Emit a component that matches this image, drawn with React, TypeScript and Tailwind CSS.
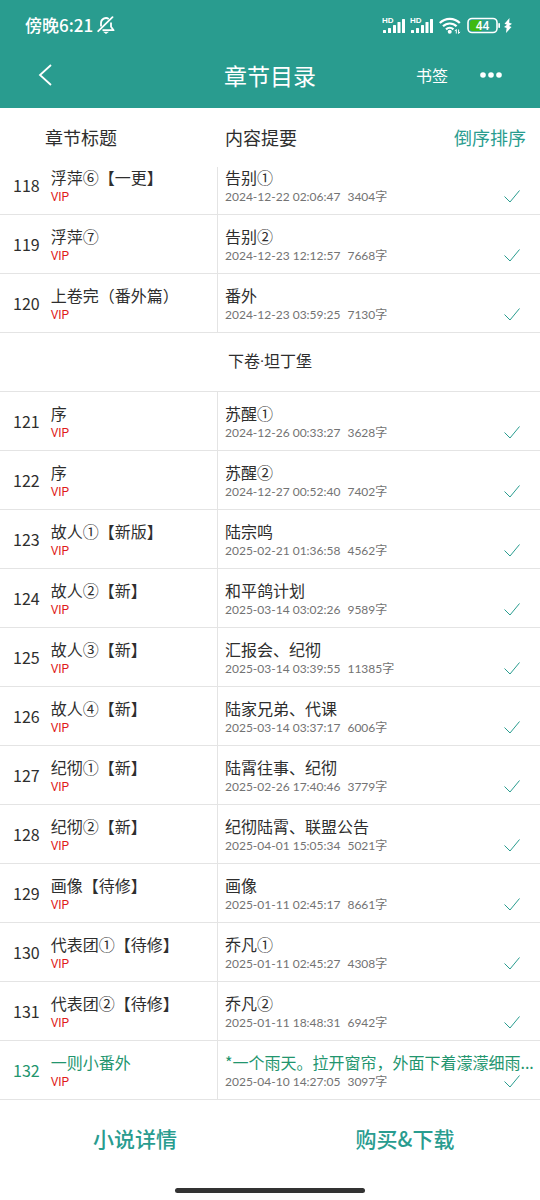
interface Chapter {
  no: number
  title: string
  summary: string
  date: string
  words: number
}

interface Volume {
  name?: string
  chapters: Chapter[]
}

const CURRENT_CHAPTER = 132

const volumes: Volume[] = [
  {
    chapters: [
      { no: 118, title: '浮萍⑥【一更】', summary: '告别①', date: '2024-12-22 02:06:47', words: 3404 },
      { no: 119, title: '浮萍⑦', summary: '告别②', date: '2024-12-23 12:12:57', words: 7668 },
      { no: 120, title: '上卷完（番外篇）', summary: '番外', date: '2024-12-23 03:59:25', words: 7130 },
    ],
  },
  {
    name: '下卷·坦丁堡',
    chapters: [
      { no: 121, title: '序', summary: '苏醒①', date: '2024-12-26 00:33:27', words: 3628 },
      { no: 122, title: '序', summary: '苏醒②', date: '2024-12-27 00:52:40', words: 7402 },
      { no: 123, title: '故人①【新版】', summary: '陆宗鸣', date: '2025-02-21 01:36:58', words: 4562 },
      { no: 124, title: '故人②【新】', summary: '和平鸽计划', date: '2025-03-14 03:02:26', words: 9589 },
      { no: 125, title: '故人③【新】', summary: '汇报会、纪彻', date: '2025-03-14 03:39:55', words: 11385 },
      { no: 126, title: '故人④【新】', summary: '陆家兄弟、代课', date: '2025-03-14 03:37:17', words: 6006 },
      { no: 127, title: '纪彻①【新】', summary: '陆霄往事、纪彻', date: '2025-02-26 17:40:46', words: 3779 },
      { no: 128, title: '纪彻②【新】', summary: '纪彻陆霄、联盟公告', date: '2025-04-01 15:05:34', words: 5021 },
      { no: 129, title: '画像【待修】', summary: '画像', date: '2025-01-11 02:45:17', words: 8661 },
      { no: 130, title: '代表团①【待修】', summary: '乔凡①', date: '2025-01-11 02:45:27', words: 4308 },
      { no: 131, title: '代表团②【待修】', summary: '乔凡②', date: '2025-01-11 18:48:31', words: 6942 },
      { no: 132, title: '一则小番外', summary: '*一个雨天。拉开窗帘，外面下着濛濛细雨...', date: '2025-04-10 14:27:05', words: 3097 },
    ],
  },
]

function MutedBellIcon() {
  return (
    <svg width="18" height="18" viewBox="0 0 18 18" fill="none" stroke="currentColor" strokeWidth="1.8" aria-hidden="true">
      <path d="M4 10.5V7a5 5 0 0 1 7.8-4.1M14 6.5v4.3l2.6 3.4H5.5" strokeLinejoin="round" />
      <path d="M1.2 15.2 15.5 1.2" strokeLinecap="round" />
      <path d="M6 15.8h6l-3 2.2z" fill="currentColor" stroke="none" />
    </svg>
  )
}

function SignalIcon() {
  return (
    <svg width="24" height="17" viewBox="0 0 24 17" fill="currentColor" aria-hidden="true">
      <text x="0" y="6" className="font-['Liberation_Sans',sans-serif] text-[8px] font-bold">HD</text>
      <rect x="1" y="13" width="3" height="3" rx="0.5" />
      <rect x="6" y="11" width="3" height="5" rx="0.5" />
      <rect x="11" y="8" width="3" height="8" rx="0.5" />
      <rect x="15.5" y="5" width="3" height="11" rx="0.5" />
      <rect x="20" y="2" width="3" height="14" rx="0.5" />
    </svg>
  )
}

function WifiIcon() {
  return (
    <svg width="22" height="17" viewBox="0 0 22 17" fill="none" stroke="currentColor" strokeWidth="2.2" aria-hidden="true">
      <path d="M0.8 6a14 14 0 0 1 20 0" />
      <path d="M4 9.3a9.6 9.6 0 0 1 13.6 0" />
      <path d="M7 12.4a5.4 5.4 0 0 1 7.4 0" />
      <circle cx="10.7" cy="14.8" r="2" fill="currentColor" stroke="none" />
      <path d="M17.3 16.5v-4l-1.5 1.6M19.6 12.5v4l1.5-1.6" strokeWidth="1" />
    </svg>
  )
}

function BatteryIcon() {
  return (
    <svg width="34" height="17" viewBox="0 0 34 17" aria-hidden="true">
      <path d="M6 3h8.5v11H6a3 3 0 0 1-3-3V6a3 3 0 0 1 3-3z" fill="#3fb911" />
      <rect x="1" y="1.5" width="29" height="14" rx="4" fill="none" stroke="currentColor" strokeWidth="1.6" />
      <rect x="31.3" y="6" width="1.7" height="5" rx="0.8" fill="currentColor" />
      <text x="15.5" y="12.5" textAnchor="middle" fill="currentColor" className="font-['Roboto',sans-serif] text-[12px] font-medium">44</text>
    </svg>
  )
}

function BoltIcon() {
  return (
    <svg width="8" height="15" viewBox="0 0 8 15" fill="currentColor" aria-hidden="true">
      <path d="M5.5 0 0.5 5.8 3 6.8 0 9l2.6 1L2 15l5.5-6L5 8l3-2.2-2.8-1z" />
    </svg>
  )
}

function CheckIcon() {
  return (
    <svg width="16" height="13" viewBox="0 0 16 13" fill="none" stroke="#299c8f" className="shrink-0" aria-label="已下载">
      <path d="M0.5 6.5 6 12 15.5 0.5" />
    </svg>
  )
}

function StatusBar() {
  return (
    <div className="flex h-[50px] items-center justify-between pl-[25px] pr-7">
      <div className="flex items-center gap-1">
        <span className="text-[17px] font-medium">傍晚6:21</span>
        <MutedBellIcon />
      </div>
      <div className="flex items-center">
        <div className="flex gap-1">
          <SignalIcon />
          <SignalIcon />
        </div>
        <div className="ml-[5px] flex items-center gap-[6px]">
          <WifiIcon />
          <BatteryIcon />
        </div>
        <span className="ml-[3px]"><BoltIcon /></span>
      </div>
    </div>
  )
}

function NavBar() {
  return (
    <nav className="grid h-[58px] grid-cols-[1fr_auto_1fr] items-center pb-2 pl-[38px] pr-[38px]">
      <button type="button" aria-label="返回" className="justify-self-start">
        <svg width="14" height="22" viewBox="0 0 14 22" fill="none" stroke="currentColor" strokeWidth="1.8">
          <path d="M13 1 2 11l11 10" />
        </svg>
      </button>
      <h1 className="text-[23px] leading-8">章节目录</h1>
      <div className="flex items-center gap-8 justify-self-end">
        <button type="button" className="text-[16px]">书签</button>
        <button type="button" aria-label="更多">
          <svg width="22" height="6" viewBox="0 0 22 6" fill="currentColor">
            <circle cx="3" cy="3" r="2.8" />
            <circle cx="11" cy="3" r="2.8" />
            <circle cx="19" cy="3" r="2.8" />
          </svg>
        </button>
      </div>
    </nav>
  )
}

// clipped: the row is partly scrolled under the column headings
function ChapterRow({ chapter, clipped }: { chapter: Chapter; clipped: boolean }) {
  const color = chapter.no === CURRENT_CHAPTER ? 'text-[#22956e]' : 'text-[#2e2e2e]'
  const offset = clipped ? '-mt-[11px]' : ''

  return (
    <tr>
      <td className="border-b border-r border-[#e4e4e4] p-0">
        <div className={`flex h-[58px] items-center gap-[11px] pl-[13px] ${offset} ${color}`}>
          <span className="text-[16px]">{chapter.no}</span>
          <div className="pt-[3px]">
            <a href={`#${chapter.no}`} className="block whitespace-nowrap text-[16px] leading-5">{chapter.title}</a>
            <span className="block font-['Roboto',sans-serif] text-[12px] leading-5 text-[#e01b1b]">VIP</span>
          </div>
        </div>
      </td>
      <td className="border-b border-[#e4e4e4] p-0">
        <div className={`flex h-[58px] flex-col justify-center pl-[7px] pt-[3px] ${offset}`}>
          <span className={`block whitespace-nowrap text-[16px] leading-5 ${color}`}>{chapter.summary}</span>
          <div className="flex items-center justify-between pr-5 font-['Lato','Noto_Sans_CJK_SC',sans-serif] text-[12px] leading-5 text-[#737373]">
            <div className="flex gap-[7px]">
              <time>{chapter.date}</time>
              <span>{chapter.words}字</span>
            </div>
            <CheckIcon />
          </div>
        </div>
      </td>
    </tr>
  )
}

function ChapterTable() {
  return (
    <table className="w-full table-fixed border-separate border-spacing-0 text-left">
      <thead className="text-[18px] text-[#2e2e2e]">
        <tr className="h-[59px]">
          <th scope="col" className="w-[218px] p-0 pl-[45px] font-normal">章节标题</th>
          <th scope="col" className="p-0 pl-[7px] pr-[14px] font-normal">
            <div className="flex items-center justify-between">
              <span>内容提要</span>
              <button type="button" className="text-[#299c8f]">倒序排序</button>
            </div>
          </th>
        </tr>
      </thead>
      {volumes.map((volume, i) => (
        <tbody key={i}>
          {volume.name && (
            <tr className="h-[59px]">
              <th colSpan={2} scope="colgroup" className="border-b border-[#e4e4e4] p-0 text-center font-['Roboto','Noto_Sans_CJK_SC',sans-serif] text-[16px] font-normal text-[#2e2e2e]">
                {volume.name}
              </th>
            </tr>
          )}
          {volume.chapters.map((chapter, j) => (
            <ChapterRow key={chapter.no} chapter={chapter} clipped={i === 0 && j === 0} />
          ))}
        </tbody>
      ))}
    </table>
  )
}

function App() {
  return (
    <div className="flex min-h-screen flex-col bg-white font-['Noto_Sans_CJK_SC',sans-serif]">
      <header className="bg-[#299c8f] text-white">
        <StatusBar />
        <NavBar />
      </header>
      <main className="flex-1">
        <ChapterTable />
      </main>
      <footer>
        <div className="flex h-20 pb-[2px] text-[21px] font-medium text-[#299c8f]">
          <button type="button" className="flex-1">小说详情</button>
          <button type="button" className="flex-1">购买&amp;下载</button>
        </div>
        <div className="flex h-5 items-center justify-center">
          <div className="h-[5px] w-[190px] rounded-full bg-[#333333]" />
        </div>
      </footer>
    </div>
  )
}

export default App
